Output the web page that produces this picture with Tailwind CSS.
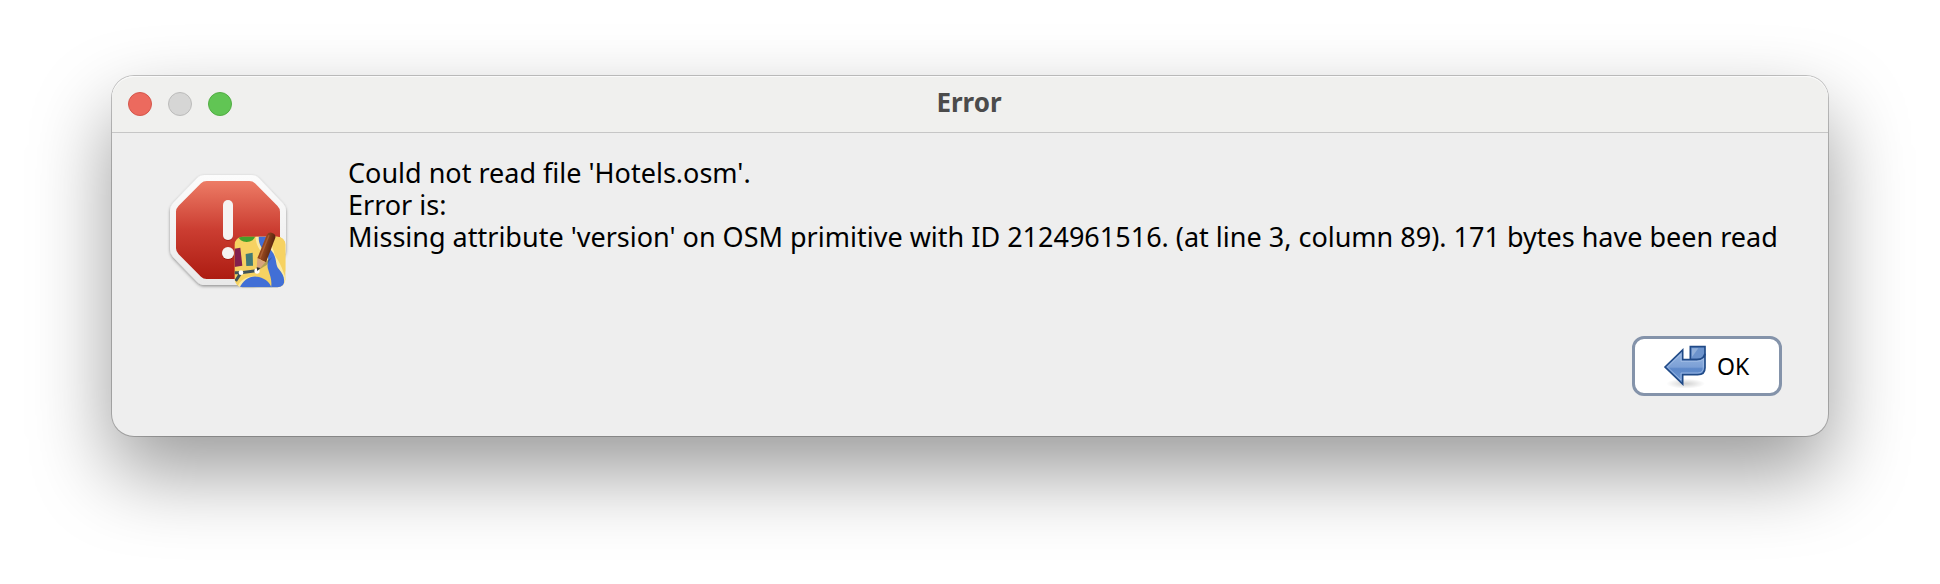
<!DOCTYPE html>
<html lang="en">
<head>
<meta charset="utf-8">
<title>Error</title>
<script src="https://cdn.jsdelivr.net/npm/@tailwindcss/browser@4"></script>
</head>
<body class="bg-white overflow-hidden px-28 pt-[76px] pb-37 font-['Noto_Sans',sans-serif] text-black">
<section role="dialog" aria-labelledby="title" class="rounded-[22px] bg-[#eeeeee] shadow-[0_0_0_1px_rgba(0,0,0,0.22),0_36px_80px_rgba(0,0,0,0.4)]">
  <header class="grid grid-cols-3 items-center h-[57px] px-4 rounded-t-[22px] bg-[#f0f0ee] border-b border-[#c6c6c6] shadow-[inset_0_1px_0_#fafafa]">
    <div class="flex gap-4">
      <button aria-label="Close" class="size-6 rounded-full bg-[#ec6a5e] border border-[#d5564b]"></button>
      <button aria-label="Minimize" disabled class="size-6 rounded-full bg-[#d6d6d5] border border-[#bcbcbb]"></button>
      <button aria-label="Zoom" class="size-6 rounded-full bg-[#61c554] border border-[#52ad43]"></button>
    </div>
    <h1 id="title" class="pb-1 pr-0.5 text-center text-[26px] leading-8 font-bold text-[#4b4b4b]">Error</h1>
  </header>
  <div class="flex items-start gap-12 pl-[43px] pr-10 pt-6">
    <svg class="w-[145px] h-[130px] mt-2 shrink-0" viewBox="0 0 435 390" aria-hidden="true">
      <defs>
        <linearGradient id="red" x1="0" y1="0" x2="0" y2="1"><stop offset="0" stop-color="#ed7c66"/><stop offset=".5" stop-color="#cb3d31"/><stop offset="1" stop-color="#ad1c12"/></linearGradient>
        <linearGradient id="rim" x1="0" y1="0" x2="0" y2="1"><stop offset="0" stop-color="#fcfcfc"/><stop offset="1" stop-color="#e9e9e9"/></linearGradient>
        <linearGradient id="wood" x1="0" y1="0" x2="1" y2=".4"><stop offset="0" stop-color="#6b2b10"/><stop offset=".45" stop-color="#9a4a20"/><stop offset="1" stop-color="#4a1c0b"/></linearGradient>
        <filter id="drop" x="-20%" y="-20%" width="140%" height="140%"><feDropShadow dx="0" dy="4" stdDeviation="4" flood-opacity=".4"/></filter>
        <filter id="soft" x="-40%" y="-20%" width="180%" height="140%"><feDropShadow dx="0" dy="2" stdDeviation="2" flood-color="#700" flood-opacity=".6"/></filter>
        <clipPath id="tile"><rect x="239" y="215" width="152" height="152" rx="24"/></clipPath>
      </defs>
      <path filter="url(#drop)" fill="url(#rim)" d="M150 30H288Q302 30 312 40L382 113Q393 124 393 138V252Q393 266 383 276L312 350Q302 360 288 360H150Q136 360 126 350L54 276Q45 266 45 252V138Q45 124 55 113L126 40Q136 30 150 30Z"/>
      <path fill="url(#red)" d="M155 48H283Q293 48 300 55L367 122Q375 130 375 140V250Q375 260 367 268L300 335Q293 342 283 342H155Q145 342 138 335L71 268Q63 260 63 250V140Q63 130 71 122L138 55Q145 48 155 48Z"/>
      <g filter="url(#soft)" fill="#f6f3f2"><rect x="204" y="105" width="30" height="120" rx="15"/><circle cx="219" cy="264" r="18"/></g>
      <g clip-path="url(#tile)">
        <path fill="#f6d262" d="M235 210H395V370H235Z"/>
        <path fill="#fbeaa4" d="M302 210C300 260 340 270 342 300C343 325 360 340 372 370H395V345C385 325 380 300 365 280C350 262 362 235 365 210Z"/>
        <path fill="#f6d262" d="M352 210C347 240 352 258 370 280C382 294 388 315 395 325V210Z"/>
        <path fill="#416fd6" d="M312 210C308 236 320 250 334 263C347 278 332 296 340 315C345 332 352 345 348 370H382C393 345 386 329 372 313C359 298 368 280 350 258C338 243 338 225 345 210Z"/>
        <path fill="#fbeaa4" d="M245 370C262 325 318 320 350 370Z"/>
        <path fill="#416fd6" d="M253 370C264 342 290 329 312 336C332 342 345 352 350 370Z"/>
        <ellipse cx="275" cy="214" rx="25" ry="17" fill="#44a02b"/>
        <path fill="#83204e" d="M238 251L256 248L262 302L238 306Z"/>
        <path fill="#427a76" d="M272 267L293 263L294 302L274 303Z"/>
        <path d="M238 323H258L306 317M258 323L242 348" fill="none" stroke="#405359" stroke-width="9"/>
        <path d="M310 305L352 276L335 300L307 317Z" fill="#343" opacity=".35"/>
      </g>
      <circle cx="258" cy="323" r="7" fill="#fff"/><circle cx="306" cy="318" r="8" fill="#fff"/>
      <path fill="url(#wood)" d="M335 210Q340 201 350 203Q363 207 361 218L333 292L307 280Z"/>
      <path fill="#d9a47c" d="M307 280L316 283L323 289L332 291L311 314L305 312Z"/>
      <path fill="#262c2c" d="M305 307L316 309L307 318Z"/>
      <path d="M342 211L315 279" stroke="#b76b3e" stroke-width="4" opacity=".65"/>
    </svg>
    <p class="text-[27px] leading-8 whitespace-nowrap">Could not read file 'Hotels.osm'.<br>Error is:<br>Missing attribute 'version' on OSM primitive with ID 2124961516. (at line 3, column 89). 171 bytes have been read</p>
  </div>
  <footer class="flex justify-end pt-[41px] pb-10 pr-[46px]">
    <button class="flex items-center gap-2.5 h-15 w-[150px] pl-7 rounded-xl border-3 border-[#8493aa] bg-white text-[23px] leading-8">
      <svg class="w-11 h-[46px] shrink-0" viewBox="160 69 132 138" aria-hidden="true">
        <defs>
          <linearGradient id="blue" x1="0" y1="0" x2="0" y2="1"><stop offset="0" stop-color="#9ab8e2"/><stop offset=".5" stop-color="#7ca0d6"/><stop offset=".55" stop-color="#5d88c9"/><stop offset="1" stop-color="#729cd5"/></linearGradient>
          <radialGradient id="floor"><stop offset="0" stop-opacity=".18"/><stop offset="1" stop-opacity="0"/></radialGradient>
        </defs>
        <ellipse cx="228" cy="191" rx="58" ry="15" fill="url(#floor)"/>
        <path d="M242 80H286V102Q283 119 264 119H242Z" fill="#6c93cc" stroke="#204a87" stroke-width="5"/>
        <path d="M247 85H266L247 111Z" fill="#91afd9"/>
        <path d="M166 141L219 90V119H261Q282 119 286 101V143Q286 164 264 164H219V192Z" fill="url(#blue)" stroke="#204a87" stroke-width="5"/>
        <path d="M173 141L214 102V124H262Q276 124 281 116V142Q281 159 264 159H214V180Z" fill="none" stroke="#a8c2e8" stroke-width="3" opacity=".7"/>
      </svg>
      <span>OK</span>
    </button>
  </footer>
</section>
</body>
</html>
